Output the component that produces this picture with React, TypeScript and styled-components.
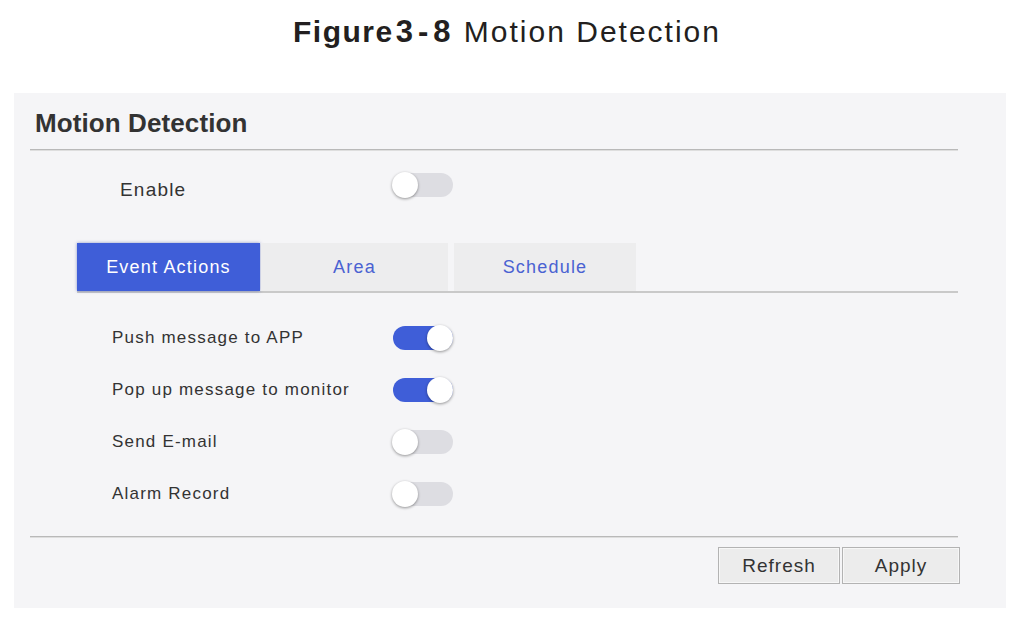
import styled, { createGlobalStyle } from "styled-components";
import { useState } from "react";

const GlobalStyle = createGlobalStyle`
  body {
    margin: 0;
    background: #ffffff;
    font-family: "Liberation Sans", Arial, sans-serif;
    color: #333333;
  }
`;

const Page = styled.div`
  width: 1014px;
  height: 621px;
  overflow: hidden;
`;

const Caption = styled.h1`
  margin: 17px 0 0;
  height: 30px;
  line-height: 30px;
  font-size: 30px;
  font-weight: 400;
  text-align: center;
  color: #231f20;
  white-space: nowrap;
`;

const CaptionLabel = styled.span`
  font-weight: 700;
  letter-spacing: 1.5px;
`;

const CaptionNumber = styled.span`
  font-weight: 700;
  font-size: 31px;
  letter-spacing: 5px;
  margin-left: 2px;
`;

const CaptionTitle = styled.span`
  letter-spacing: 2px;
`;

const Panel = styled.section`
  margin: 46px 0 0 14px;
  width: 992px;
  height: 515px;
  box-sizing: border-box;
  background: #f5f5f7;
  padding: 0 48px 0 16px;
  display: flex;
  flex-direction: column;
`;

const PanelTitle = styled.h2`
  margin: 0 0 13px;
  padding: 17px 0 0 5px;
  height: 26px;
  line-height: 26px;
  font-size: 26px;
  font-weight: 700;
  letter-spacing: 0.1px;
  color: #333333;
`;

const Divider = styled.div`
  height: 2px;
  background: linear-gradient(#b9b9b9 0 50%, #dedede 50% 100%);
`;

const Row = styled.div<{ $inset: number; $labelWidth: number; $height: number }>`
  display: flex;
  align-items: center;
  height: ${(p) => p.$height}px;
  padding-left: ${(p) => p.$inset}px;

  & > span {
    width: ${(p) => p.$labelWidth}px;
  }
`;

const EnableRow = styled(Row)`
  margin-top: 12px;

  & > span {
    padding-top: 9px;
  }
`;

const Label = styled.span<{ $size?: number }>`
  font-size: ${(p) => p.$size ?? 17}px;
  letter-spacing: 1.2px;
  color: #333333;
`;

const Track = styled.button<{ $on: boolean }>`
  position: relative;
  width: 60px;
  height: 24px;
  padding: 0;
  border: none;
  border-radius: 12px;
  background: ${(p) => (p.$on ? "#3f5ed8" : "#dddde2")};
  cursor: pointer;
  flex-shrink: 0;
`;

const Knob = styled.span<{ $on: boolean }>`
  position: absolute;
  top: -1px;
  left: ${(p) => (p.$on ? "34px" : "-1px")};
  width: 26px;
  height: 26px;
  border-radius: 50%;
  background: #ffffff;
  box-shadow: 0 1px 3px rgba(0, 0, 0, 0.4);
`;

const Tabs = styled.div`
  margin: 36px 0 0 47px;
  display: flex;
  border-bottom: 2px solid #c9c9c9;
`;

const Tab = styled.button<{ $active: boolean; $width: number }>`
  width: ${(p) => p.$width}px;
  height: 48px;
  border: none;
  padding: 0;
  font-family: "Liberation Sans", Arial, sans-serif;
  font-size: 18px;
  letter-spacing: 1.2px;
  background: ${(p) => (p.$active ? "#3f5ed8" : "#ededee")};
  color: ${(p) => (p.$active ? "#ffffff" : "#4a62d2")};
  box-shadow: ${(p) => (p.$active ? "0 0 3px rgba(40, 60, 160, 0.5)" : "none")};
  cursor: pointer;

  & + & {
    margin-left: 1px;
  }
  &:last-child {
    margin-left: 6px;
  }
`;

const Rows = styled.div`
  margin-top: 19px;
  margin-bottom: 16px;
`;

const Actions = styled.div`
  display: flex;
  justify-content: flex-end;
  gap: 2px;
  margin: 9px -2px 0 0;
`;

const Button = styled.button<{ $width: number }>`
  width: ${(p) => p.$width}px;
  height: 37px;
  background: #ececec;
  border: 1px solid #b3b3b3;
  box-shadow: inset 0 0 0 1px #f7f7f7;
  font-family: "Liberation Sans", Arial, sans-serif;
  font-size: 19px;
  letter-spacing: 1px;
  color: #333333;
  cursor: pointer;
`;

function Toggle({ on, onClick }: { on: boolean; onClick: () => void }) {
  return (
    <Track $on={on} onClick={onClick}>
      <Knob $on={on} />
    </Track>
  );
}

const tabs = [
  { name: "Event Actions", width: 183 },
  { name: "Area", width: 187 },
  { name: "Schedule", width: 182 },
];

export default function App() {
  const [enabled, setEnabled] = useState(false);
  const [activeTab, setActiveTab] = useState(0);
  const [actions, setActions] = useState([
    { label: "Push message to APP", on: true },
    { label: "Pop up message to monitor", on: true },
    { label: "Send E-mail", on: false },
    { label: "Alarm Record", on: false },
  ]);

  const flip = (i: number) =>
    setActions((list) => list.map((a, j) => (j === i ? { ...a, on: !a.on } : a)));

  return (
    <Page>
      <GlobalStyle />
      <Caption>
        <CaptionLabel>Figure</CaptionLabel>
        <CaptionNumber>3-8</CaptionNumber> <CaptionTitle>Motion Detection</CaptionTitle>
      </Caption>
      <Panel>
        <PanelTitle>Motion Detection</PanelTitle>
        <Divider />
        <EnableRow $inset={90} $labelWidth={273} $height={44}>
          <Label $size={19}>Enable</Label>
          <Toggle on={enabled} onClick={() => setEnabled(!enabled)} />
        </EnableRow>
        <Tabs>
          {tabs.map((t, i) => (
            <Tab
              key={t.name}
              $width={t.width}
              $active={i === activeTab}
              onClick={() => setActiveTab(i)}
            >
              {t.name}
            </Tab>
          ))}
        </Tabs>
        <Rows>
          {actions.map((a, i) => (
            <Row key={a.label} $inset={82} $labelWidth={281} $height={52}>
              <Label>{a.label}</Label>
              <Toggle on={a.on} onClick={() => flip(i)} />
            </Row>
          ))}
        </Rows>
        <Divider />
        <Actions>
          <Button $width={122}>Refresh</Button>
          <Button $width={118}>Apply</Button>
        </Actions>
      </Panel>
    </Page>
  );
}
